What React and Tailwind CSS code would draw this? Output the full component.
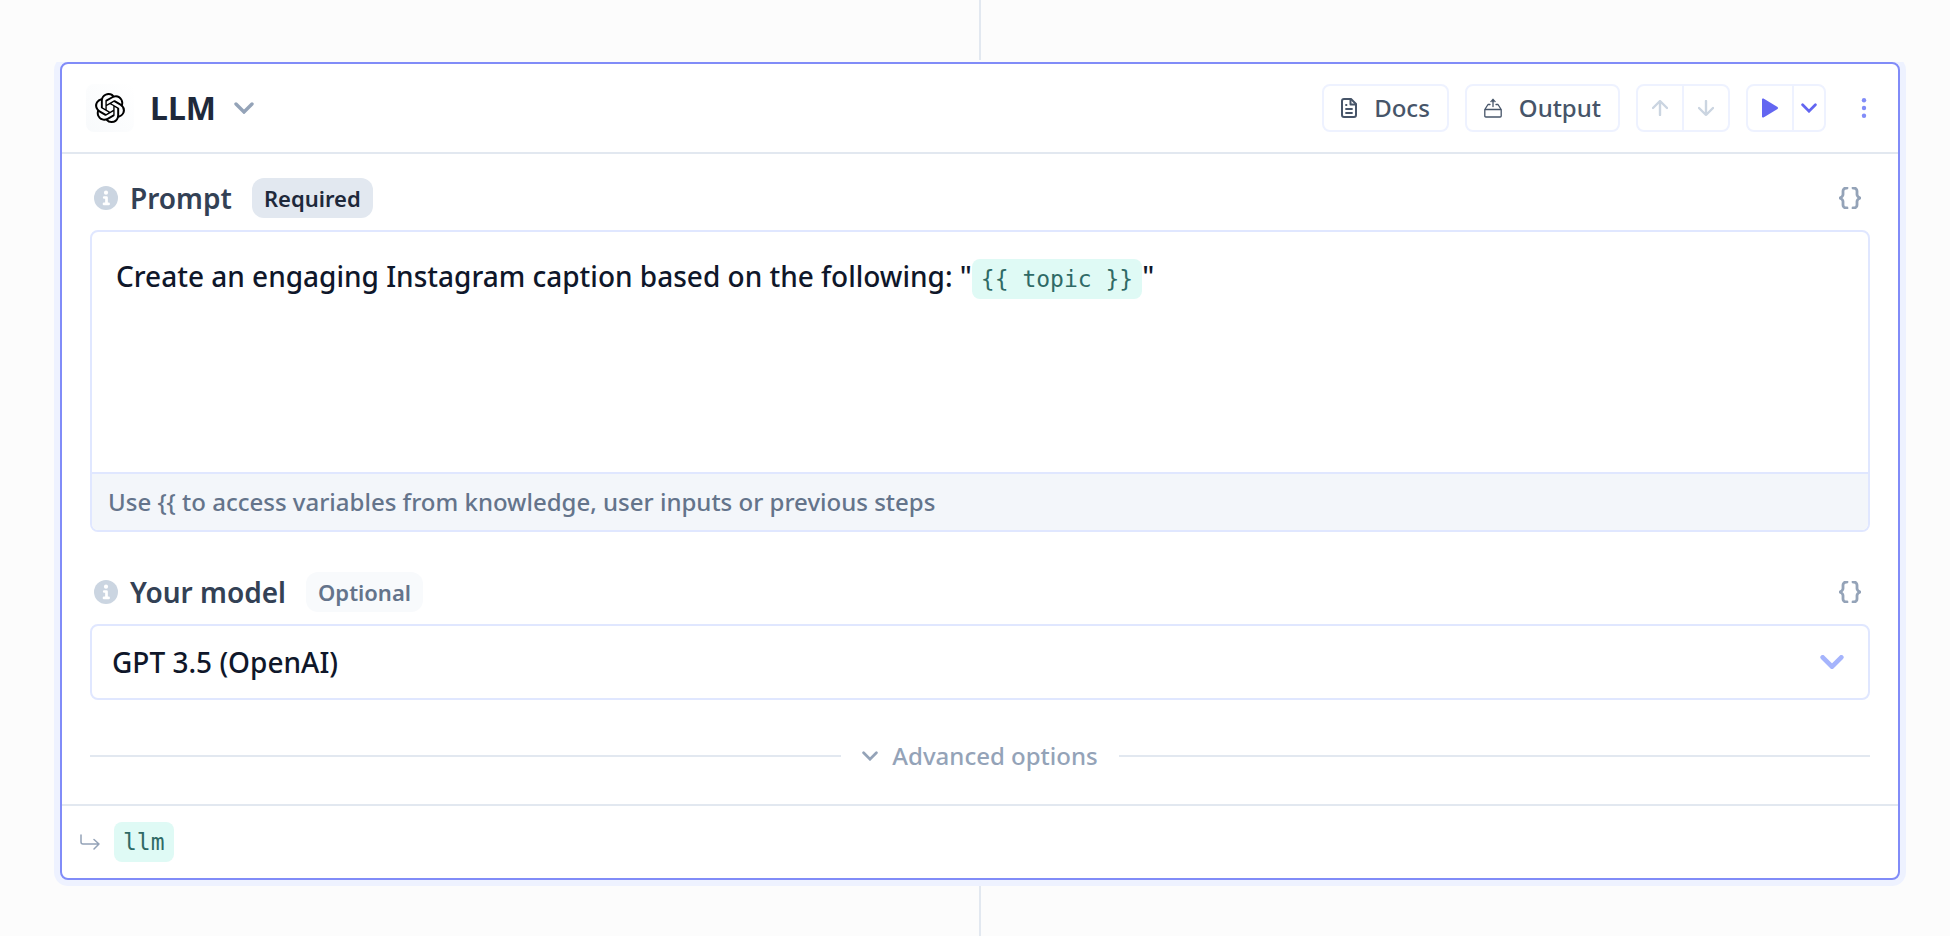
import { SiOpenai } from "react-icons/si";

const stroke = {
  fill: "none",
  stroke: "currentColor",
  strokeLinecap: "round",
  strokeLinejoin: "round",
  "aria-hidden": true,
};

function Chevron({ className, width = 3.4 }) {
  return (
    <svg viewBox="0 0 20 12" className={className} {...stroke} strokeLinejoin="miter" strokeWidth={width}>
      <path d="M2 2l8 8 8-8" />
    </svg>
  );
}

function InfoIcon() {
  return (
    <svg viewBox="0 0 24 24" className="size-6 text-[#cbd5e1]" aria-hidden="true">
      <circle cx="12" cy="12" r="12" fill="currentColor" />
      <circle cx="12" cy="6.700" r="2.100" fill="#fff" />
      <path d="M10.200 11.500h2.300v6.300M10 17.900h4.600" fill="none" stroke="#fff" strokeWidth="2.700" strokeLinecap="round" strokeLinejoin="round" />
    </svg>
  );
}

function DocIcon() {
  return (
    <svg viewBox="0 0 16 20" className="h-5 w-4" {...stroke} strokeWidth="2">
      <path d="M3 1h7l5 5v11a2 2 0 0 1-2 2H3a2 2 0 0 1-2-2V3a2 2 0 0 1 2-2z" />
      <path d="M9.500 1.500V6.500H14.500" />
      <path d="M5 7h.5M5 11h6M5 15h6" strokeWidth="1.800" />
    </svg>
  );
}

function OutputIcon() {
  return (
    <svg viewBox="0 0 18 20" className="h-5 w-[18px]" {...stroke} strokeWidth="1.300">
      <path d="M9 8.500V2" />
      <path d="M6.600 3.400L9 .8l2.400 2.600z" fill="currentColor" strokeWidth="0.600" />
      <path d="M6 6.500H4L.8 11.500V18a1 1 0 0 0 1 1h14.400a1 1 0 0 0 1-1v-6.500L14 6.500h-2M.8 11.500h16.400" />
    </svg>
  );
}

function Arrow({ down }) {
  return (
    <svg viewBox="0 0 16 16" className={down ? "size-4 rotate-180" : "size-4"} {...stroke} strokeWidth="2.400">
      <path d="M8 15V1.200M1 8l7-7 7 7" />
    </svg>
  );
}

function Braces() {
  return (
    <svg viewBox="0 0 22 22" className="size-[22px]" {...stroke} strokeWidth="2.800">
      <path d="M8 1H7a3 3 0 0 0-3 3v3.500c0 1.500-1 2.500-3 3.500 2 1 3 2 3 3.500V18a3 3 0 0 0 3 3h1" />
      <path d="M14 1h1a3 3 0 0 1 3 3v3.500c0 1.500 1 2.500 3 3.500-2 1-3 2-3 3.500V18a3 3 0 0 1-3 3h-1" />
    </svg>
  );
}

function FieldHeader({ id, label, children }) {
  return (
    <div className="flex items-center pr-[9px] pl-1">
      <InfoIcon />
      <label id={id + "-label"} htmlFor={id} className="ml-3 text-[28px] leading-10 font-semibold text-[#334155]">
        {label}
      </label>
      {children}
      <button type="button" aria-label={"Insert variable into " + label} className="ml-auto text-[#94a3b8]">
        <Braces />
      </button>
    </div>
  );
}

const group = "flex h-12 overflow-hidden rounded-lg border-2 border-[#eef2ff]";
const button =
  "flex h-12 items-center gap-[17px] rounded-lg border-2 border-[#eef2ff] px-[17px] text-2xl font-medium text-[#475569]";
const chip =
  "inline-block rounded-lg bg-[#dffaf5] px-[9px] font-['DejaVu_Sans_Mono',monospace] text-[23px] leading-10 font-normal text-[#2f6a66]";

export default function App() {
  return (
    <main className="flex min-h-screen flex-col items-center bg-[#fcfcfc] pr-[50px] pl-[60px] font-['Noto_Sans',sans-serif]">
      <div className="mb-0.5 h-[60px] w-0.5 bg-slate-200" />
      <section className="w-full rounded-lg border-2 border-[#818cf8] bg-white shadow-[0_0_0_6px_#eef2ff] [clip-path:inset(0_-6px_-6px_-6px)]">
        <header className="flex items-center border-b-2 border-slate-200 py-5 pr-3 pl-6">
          <div className="flex size-12 items-center justify-center rounded-lg bg-linear-to-tr from-slate-50 to-white">
            <SiOpenai className="size-[30px] text-black" aria-hidden="true" />
          </div>
          <h1 className="ml-4 text-[32px] leading-10 font-bold text-[#1e293b]">LLM</h1>
          <button type="button" aria-label="Change step type" className="ml-[18px] text-[#94a3b8]">
            <Chevron className="h-3 w-5" />
          </button>
          <div className="ml-auto flex items-center gap-4">
            <button type="button" className={button}>
              <DocIcon />
              Docs
            </button>
            <button type="button" className={button}>
              <OutputIcon />
              Output
            </button>
            <div className={group + " text-[#cbd5e1]"}>
              <button type="button" aria-label="Move up" className="flex w-11 items-center justify-center">
                <Arrow />
              </button>
              <button type="button" aria-label="Move down" className="flex w-[46px] items-center justify-center border-l-2 border-[#eef2ff]">
                <Arrow down />
              </button>
            </div>
            <div className={group + " text-[#6366f1]"}>
              <button type="button" aria-label="Run step" className="flex w-11 items-center justify-center">
                <svg viewBox="0 0 18 20" className="h-5 w-[18px]" fill="currentColor" aria-hidden="true">
                  <path d="M1 1.500Q1 0 2.500.6L16.500 9q1.300 1 0 2L2.500 19.400Q1 20 1 18.500z" />
                </svg>
              </button>
              <button type="button" aria-label="Run options" className="flex w-8 items-center justify-center border-l-2 border-[#eef2ff]">
                <Chevron className="h-[10px] w-4" />
              </button>
            </div>
            <button type="button" aria-label="More options" className="flex h-12 w-11 items-center justify-center text-[#818cf8]">
              <svg viewBox="0 0 6 20" className="h-5 w-[6px]" fill="currentColor" aria-hidden="true">
                <circle cx="3" cy="2.200" r="2.200" />
                <circle cx="3" cy="10" r="2.200" />
                <circle cx="3" cy="17.800" r="2.200" />
              </svg>
            </button>
          </div>
        </header>

        <div className="px-7 pt-6">
          <FieldHeader id="prompt" label="Prompt">
            <span className="ml-5 rounded-xl bg-slate-200 px-3 text-[22px] leading-10 font-semibold text-[#1e293b]">
              Required
            </span>
          </FieldHeader>
          <div className="mt-3 overflow-hidden rounded-lg border-2 border-[#e0e7ff]">
            <div
              id="prompt"
              role="textbox"
              aria-multiline="true"
              aria-labelledby="prompt-label"
              contentEditable
              suppressContentEditableWarning
              className="h-60 px-6 py-6 text-[28px] leading-10 font-medium text-[#0f172a]"
            >
              Create an engaging Instagram caption based on the following: "
              <code className={chip}>{"{{ topic }}"}</code>"
            </div>
            <p className="border-t-2 border-[#e0e7ff] bg-[#f3f6fa] px-4 py-2 text-2xl leading-10 font-medium text-[#64748b]">
              Use {"{{"} to access variables from knowledge, user inputs or previous steps
            </p>
          </div>

          <div className="mt-10">
            <FieldHeader id="model" label="Your model">
              <span className="ml-5 rounded-xl bg-slate-50 px-3 text-[22px] leading-10 font-semibold text-[#64748b]">
                Optional
              </span>
            </FieldHeader>
          </div>
          <div className="mt-3 grid items-center">
            <select
              id="model"
              className="col-start-1 row-start-1 h-[76px] w-full appearance-none rounded-lg border-2 border-[#e0e7ff] bg-white px-5 text-[28px] font-medium text-[#0f172a]"
            >
              <option>GPT 3.5 (OpenAI)</option>
            </select>
            <div className="pointer-events-none col-start-1 row-start-1 mr-[26px] justify-self-end text-[#a5b4fc]">
              <Chevron className="h-[14px] w-6" width={4} />
            </div>
          </div>

          <div className="flex items-center gap-[21px] pt-9 pb-7">
            <div className="h-0.5 flex-1 bg-slate-200" />
            <button type="button" className="flex items-center gap-[14px] text-2xl leading-10 font-medium text-[#94a3b8]">
              <Chevron className="h-[10px] w-4" />
              Advanced options
            </button>
            <div className="h-0.5 flex-1 bg-slate-200" />
          </div>
        </div>

        <footer className="flex items-center gap-[14px] border-t-2 border-slate-200 px-[18px] py-4">
          <svg viewBox="0 0 20 16" className="h-4 w-5 text-[#94a3b8]" {...stroke} strokeWidth="1.500">
            <path d="M1 1v7a2 2 0 0 0 2 2h16M14 5.500l5 4.500-5 5" />
          </svg>
          <code className={chip}>llm</code>
        </footer>
      </section>
      <div className="mt-[6px] w-0.5 flex-1 bg-slate-200" />
    </main>
  );
}
